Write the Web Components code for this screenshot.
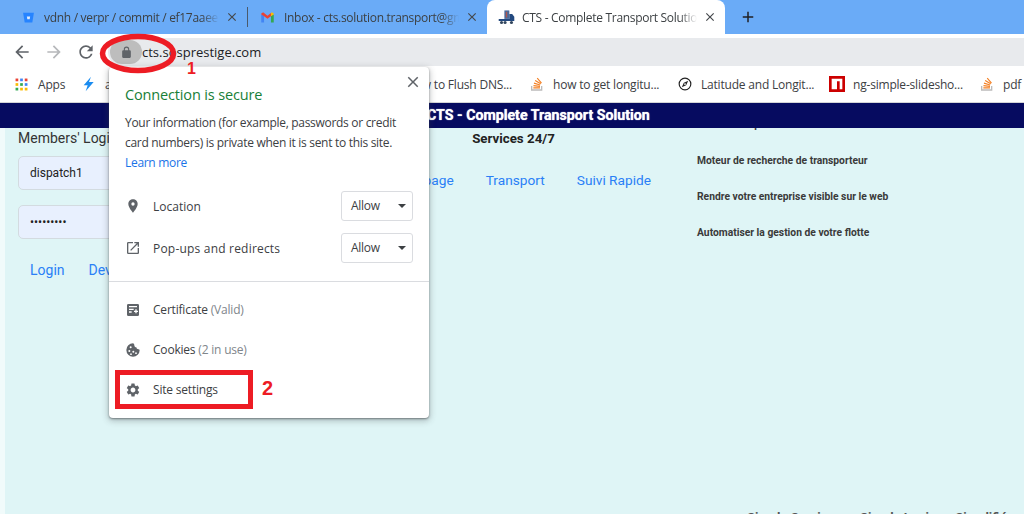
<!DOCTYPE html>
<html lang="en">
<head>
<meta charset="utf-8">
<title>CTS - Complete Transport Solution</title>
<style>
    html, body { margin: 0; padding: 0; height: 100%; overflow: hidden; background: #fff; }
</style>
</head>
<body>
<app-root></app-root>
<script>
const ICONS = {
    back: 'M20 11H7.83l5.59-5.59L12 4l-8 8 8 8 1.41-1.41L7.83 13H20v-2z',
    reload: 'M17.65 6.35A7.96 7.96 0 0 0 12 4c-4.42 0-7.99 3.58-7.99 8s3.57 8 7.99 8c3.73 0 6.84-2.55 7.73-6h-2.08A5.99 5.99 0 0 1 12 18c-3.31 0-6-2.69-6-6s2.69-6 6-6c1.66 0 3.14.69 4.22 1.78L13 11h7V4l-2.35 2.35z',
    close: 'M19 6.41 17.59 5 12 10.59 6.41 5 5 6.41 10.59 12 5 17.59 6.41 19 12 13.41 17.59 19 19 17.59 13.41 12z',
    plus: 'M19 13h-6v6h-2v-6H5v-2h6V5h2v6h6v2z',
    lock: 'M18 8h-1V6A5 5 0 0 0 7 6v2H6a2 2 0 0 0-2 2v10c0 1.1.9 2 2 2h12a2 2 0 0 0 2-2V10a2 2 0 0 0-2-2zM9 6a3 3 0 0 1 6 0v2H9V6z',
    pin: 'M12 2C8.13 2 5 5.13 5 9c0 5.25 7 13 7 13s7-7.75 7-13c0-3.87-3.13-7-7-7zm0 9.5a2.5 2.5 0 0 1 0-5 2.5 2.5 0 0 1 0 5z',
    external: 'M19 19H5V5h7V3H5a2 2 0 0 0-2 2v14a2 2 0 0 0 2 2h14c1.1 0 2-.9 2-2v-7h-2v7zM14 3v2h3.59l-9.83 9.83 1.41 1.41L19 6.41V10h2V3h-7z',
    certificate: 'M5 3h14a2 2 0 0 1 2 2v14a2 2 0 0 1-2 2H5a2 2 0 0 1-2-2V5a2 2 0 0 1 2-2zm1 3v2h12V6H6zm0 4v2h7v-2H6zm0 4v2h4v-2H6zm9.5-3v2h-2v2h2v2h2v-2h2v-2h-2v-2h-2z',
    cookie: 'M12 2a10 10 0 1 0 10 10c-.3-.9-1-1.2-1.8-1.2-1.8 0-3-1-3.2-2.8-1.8-.2-3-1.4-3-3.2C14 3.8 13.2 2.3 12 2zM8.5 6.5a1.5 1.5 0 1 1 0 3 1.5 1.5 0 0 1 0-3zM6.5 12a1.5 1.5 0 1 1 0 3 1.5 1.5 0 0 1 0-3zm6 1a1.5 1.5 0 1 1 0 3 1.5 1.5 0 0 1 0-3zm-3.5 4a1.3 1.3 0 1 1 0 2.6 1.3 1.3 0 0 1 0-2.6zm7.5-1.5a1.3 1.3 0 1 1 0 2.6 1.3 1.3 0 0 1 0-2.6z',
    gear: 'M19.14 12.94c.04-.3.06-.61.06-.94 0-.32-.02-.64-.07-.94l2.03-1.58a.49.49 0 0 0 .12-.61l-1.92-3.32a.488.488 0 0 0-.59-.22l-2.39.96c-.5-.38-1.03-.7-1.62-.94l-.36-2.54a.484.484 0 0 0-.48-.41h-3.84c-.24 0-.43.17-.47.41l-.36 2.54c-.59.24-1.13.57-1.62.94l-2.39-.96c-.22-.08-.47 0-.59.22L2.74 8.87c-.12.21-.08.47.12.61l2.03 1.58c-.05.3-.09.63-.09.94s.02.64.07.94l-2.03 1.58a.49.49 0 0 0-.12.61l1.92 3.32c.12.22.37.29.59.22l2.39-.96c.5.38 1.03.7 1.62.94l.36 2.54c.05.24.24.41.48.41h3.84c.24 0 .44-.17.47-.41l.36-2.54c.59-.24 1.13-.56 1.62-.94l2.39.96c.22.08.47 0 .59-.22l1.92-3.32c.12-.22.07-.47-.12-.61l-2.01-1.58zM12 15.6c-1.98 0-3.6-1.62-3.6-3.6s1.62-3.6 3.6-3.6 3.6 1.62 3.6 3.6-1.62 3.6-3.6 3.6z'
};

const FAVICONS = {
    bitbucket: '<path fill="#2684ff" d="M2 3h20l-3 18H5z"/><path fill="#fff" opacity=".85" d="M9 10h6l-.8 5H9.8z"/>',
    gmail: '<path fill="#4285f4" d="M2 7v13h4.5V9z"/><path fill="#34a853" d="M17.5 9v11H22V7z"/><path fill="#ea4335" d="M2 7c0-2.5 2.7-3.8 4.5-2.4L12 9l5.5-4.4.5 4.9-6 4.5-5.5-4.2L2 7z"/><path fill="#fbbc04" d="M17.5 4.6C19.3 3.200 22 4.5 22 7l-4.5 3z"/>',
    truck: '<path fill="#4a6a9a" d="M9 2h7v12H9z"/><path fill="#b0574f" d="M11 4h2v8h-2z"/><path fill="#23497f" d="M16 7h4l3 4v6H1v-3h15z"/><circle cx="5" cy="19" r="2.2" fill="#33475f"/><circle cx="10" cy="19" r="2.2" fill="#33475f"/><circle cx="19" cy="19" r="2.2" fill="#33475f"/>',
    apps: '<rect x="1" y="1" width="5" height="5" fill="#ea4335"/><rect x="9.5" y="1" width="5" height="5" fill="#4285f4"/><rect x="18" y="1" width="5" height="5" fill="#ea4335"/><rect x="1" y="9.5" width="5" height="5" fill="#fbbc04"/><rect x="9.5" y="9.5" width="5" height="5" fill="#34a853"/><rect x="18" y="9.5" width="5" height="5" fill="#4285f4"/><rect x="1" y="18" width="5" height="5" fill="#34a853"/><rect x="9.5" y="18" width="5" height="5" fill="#fbbc04"/><rect x="18" y="18" width="5" height="5" fill="#fbbc04"/>',
    bolt: '<path fill="#1a8cf0" d="M15 1 4 14h6l-3 9 12-14h-7z"/>',
    stack: '<path fill="#bcbbbb" d="M3 15h2v5h13v-5h2v7H3z"/><path fill="#f48024" d="M6.5 17h10v1.8h-10zM6.8 13.5l9.8 1.2-.2 1.8-9.8-1.2zM7.7 9.8l9.300 2.9-.5 1.7-9.3-2.9zM9.7 6l8.300 5-.9 1.5-8.3-5zM13 2.8l6.4 7.2-1.3 1.1-6.4-7.2z"/>',
    compass: '<circle cx="12" cy="12" r="10" fill="#fff" stroke="#222" stroke-width="2"/><path fill="#222" d="m17.5 6.5-7.5 3.5-3.500 7.500L14 14z"/><circle cx="12" cy="12" r="1.5" fill="#fff"/>',
    npm: '<path fill="#c00" d="M0 0h24v24H0z"/><path fill="#fff" d="M4 4h16v16h-4V8h-4v12H4z"/>'
};

// one element for all the material icons, path picked by name
class UiIcon extends HTMLElement {
    connectedCallback() {
        const size = this.getAttribute('size') || 16;
        const color = this.getAttribute('color') || '#5f6368';
        this.attachShadow({ mode: 'open' }).innerHTML = `
<style>:host { display: inline-flex; flex: none; width: ${size}px; height: ${size}px; } svg { display: block; }</style>
<svg width="${size}" height="${size}" viewBox="0 0 24 24"><path fill="${color}" fill-rule="evenodd" d="${ICONS[this.getAttribute('name')]}"/></svg>`;
    }
}
customElements.define('ui-icon', UiIcon);

class FavIcon extends HTMLElement {
    connectedCallback() {
        const size = this.getAttribute('size') || 16;
        this.attachShadow({ mode: 'open' }).innerHTML = `
<style>:host { display: inline-flex; flex: none; width: ${size}px; height: ${size}px; } svg { display: block; }</style>
<svg width="${size}" height="${size}" viewBox="0 0 24 24">${FAVICONS[this.getAttribute('name')]}</svg>`;
    }
}
customElements.define('fav-icon', FavIcon);

const tabTemplate = document.createElement('template');
tabTemplate.innerHTML = `
<style>
    :host {
        display: flex;
        align-items: center;
        box-sizing: border-box;
        height: 34px;
        color: #3c4043;
        font: 12px "Open Sans", "Liberation Sans", sans-serif;
        letter-spacing: -.3px;
    }
    :host([active]) { background: #fff; border-radius: 8px 8px 0 0; }
    #title {
        flex: 1;
        min-width: 0;
        overflow: hidden;
        white-space: nowrap;
        -webkit-mask-image: linear-gradient(to right, #000 90%, transparent);
    }
    ::slotted(fav-icon) { margin-right: var(--icon-gap, 9px); }
    ui-icon { margin: 0 8px 0 6px; }
</style>
<slot name="icon"></slot>
<div id="title"><slot></slot></div>
<ui-icon name="close" size="14" color="#45484c"></ui-icon>`;

class BrowserTab extends HTMLElement {
    constructor() {
        super();
        this.attachShadow({ mode: 'open' });
        this.shadowRoot.appendChild(tabTemplate.content.cloneNode(true));
    }
}
customElements.define('browser-tab', BrowserTab);

const tabsTemplate = document.createElement('template');
tabsTemplate.innerHTML = `
<style>
    :host { display: flex; height: 34px; background: #6aabf7; flex: none; }
    .sep { width: 1px; height: 20px; margin: 7px 12px 0 0; background: #4a5a6c; }
    #plus { margin: 8px 0 0 14px; }
    browser-tab:nth-of-type(1) { width: 225px; margin-left: 22px; }
    browser-tab:nth-of-type(2) { width: 227px; }
    browser-tab:nth-of-type(3) { width: 238px; padding-left: 11px; --icon-gap: 7px; }
</style>
<browser-tab><fav-icon slot="icon" name="bitbucket" size="13"></fav-icon>vdnh / verpr / commit / ef17aaee</browser-tab>
<div class="sep"></div>
<browser-tab><fav-icon slot="icon" name="gmail" size="15"></fav-icon>Inbox - cts.solution.transport@gmail.com</browser-tab>
<browser-tab active><fav-icon slot="icon" name="truck" size="17"></fav-icon>CTS - Complete Transport Solution</browser-tab>
<ui-icon id="plus" name="plus" size="18" color="#202124"></ui-icon>`;

class BrowserTabs extends HTMLElement {
    constructor() {
        super();
        this.attachShadow({ mode: 'open' });
        this.shadowRoot.appendChild(tabsTemplate.content.cloneNode(true));
    }
}
customElements.define('browser-tabs', BrowserTabs);

const toolbarTemplate = document.createElement('template');
toolbarTemplate.innerHTML = `
<style>
    :host {
        display: flex;
        align-items: center;
        flex: none;
        box-sizing: border-box;
        height: 32px;
        padding: 4px 0 0 12px;
        gap: 12px;
        background: #fff;
    }
    #url {
        flex: 1;
        display: flex;
        align-items: center;
        height: 28px;
        border-radius: 14px 0 0 14px;
        background: #e8eaed;
        color: #202124;
        font: 13px "Open Sans", "Liberation Sans", sans-serif;
    }
    #lock {
        display: flex;
        align-items: center;
        justify-content: center;
        width: 32px;
        height: 24px;
        margin-left: 2px;
        border-radius: 12px;
        background: #bdbdbd;
    }
</style>
<ui-icon name="back" size="20" color="#5f6368"></ui-icon>
<ui-icon name="back" size="20" color="#b6b8bb" style="transform: scaleX(-1)"></ui-icon>
<ui-icon name="reload" size="20" color="#5f6368"></ui-icon>
<div id="url"><div id="lock"><ui-icon name="lock" size="13" color="#5f6368"></ui-icon></div>cts.sosprestige.com</div>`;

class BrowserToolbar extends HTMLElement {
    constructor() {
        super();
        this.attachShadow({ mode: 'open' });
        this.shadowRoot.appendChild(toolbarTemplate.content.cloneNode(true));
    }
}
customElements.define('browser-toolbar', BrowserToolbar);

const bookmarkTemplate = document.createElement('template');
bookmarkTemplate.innerHTML = `
<style>
    :host {
        display: flex;
        align-items: center;
        gap: 8px;
        flex: none;
        white-space: nowrap;
        color: #3c4043;
        font: 12px "Open Sans", "Liberation Sans", sans-serif;
        letter-spacing: -.2px;
    }
    ::slotted(fav-icon[name="stack"]) { margin-left: -2px; }
    ::slotted(fav-icon[name="bolt"]) { margin-left: -3px; }
</style>
<slot name="icon"></slot><span><slot></slot></span>`;

class BookmarkItem extends HTMLElement {
    constructor() {
        super();
        this.attachShadow({ mode: 'open' });
        this.shadowRoot.appendChild(bookmarkTemplate.content.cloneNode(true));
    }
}
customElements.define('bookmark-item', BookmarkItem);

const barTemplate = document.createElement('template');
barTemplate.innerHTML = `
<style>
    :host {
        display: flex;
        align-items: center;
        flex: none;
        box-sizing: border-box;
        height: 37px;
        padding-left: 15px;
        overflow: hidden;
        background: #fff;
        border-bottom: 1px solid #d4d5d7;
    }
    bookmark-item:nth-of-type(1) { width: 69px; gap: 10px; }
    bookmark-item:nth-of-type(2) { width: 165px; }
    bookmark-item:nth-of-type(3) { width: 282px; padding-right: 19px; box-sizing: border-box; justify-content: flex-end; }
    bookmark-item:nth-of-type(4) { width: 147px; }
    bookmark-item:nth-of-type(5) { width: 151px; gap: 9px; }
    bookmark-item:nth-of-type(6) { width: 152px; }
</style>
<bookmark-item><fav-icon slot="icon" name="apps" size="13"></fav-icon>Apps</bookmark-item>
<bookmark-item><fav-icon slot="icon" name="bolt" size="16"></fav-icon>a</bookmark-item>
<bookmark-item>how to Flush DNS...</bookmark-item>
<bookmark-item><fav-icon slot="icon" name="stack" size="16"></fav-icon>how to get longitu...</bookmark-item>
<bookmark-item><fav-icon slot="icon" name="compass" size="14"></fav-icon>Latitude and Longit...</bookmark-item>
<bookmark-item><fav-icon slot="icon" name="npm" size="16"></fav-icon>ng-simple-slidesho...</bookmark-item>
<bookmark-item><fav-icon slot="icon" name="stack" size="16"></fav-icon>pdf</bookmark-item>`;

class BookmarkBar extends HTMLElement {
    constructor() {
        super();
        this.attachShadow({ mode: 'open' });
        this.shadowRoot.appendChild(barTemplate.content.cloneNode(true));
    }
}
customElements.define('bookmark-bar', BookmarkBar);

const pageTemplate = document.createElement('template');
pageTemplate.innerHTML = `
<style>
    :host {
        display: flex;
        flex-direction: column;
        flex: 1;
        min-height: 0;
        overflow: hidden;
        background: #f1fbfb;
        font-family: Roboto, "Liberation Sans", sans-serif;
        color: #333;
    }
    #banner {
        flex: none;
        height: 25px;
        padding-left: 427px;
        background: #060b60;
        color: #fff;
        font-size: 14.2px;
        font-weight: 700;
        line-height: 25px;
        white-space: nowrap;
        text-shadow: 0 0 1px #fff;
    }
    #body {
        flex: 1;
        min-height: 0;
        margin-left: 5px;
        overflow: hidden;
        display: flex;
        flex-direction: column;
        background: #dff5f6;
    }
    #cols { flex: 1; min-height: 0; display: grid; grid-template-columns: 325px 367px 1fr; }
    #login { padding: 2px 0 0 13px; font-size: 14px; }
    #login h2 { margin: 0 0 9px; font: inherit; line-height: 17px; color: #333; }
    .field {
        box-sizing: border-box;
        width: 260px;
        height: 34px;
        margin-bottom: 15px;
        padding-left: 11px;
        border: 1px solid #d3dbe0;
        border-radius: 5px;
        background: #e8f0fe;
        color: #222;
        font-size: 12px;
        line-height: 33px;
    }
    .links { display: flex; gap: 24px; padding: 8px 0 0 12px; }
    a { color: #2a7ff6; text-decoration: none; font-size: 14px; }
    #center h3 { margin: 3px 0 0; font-size: 13.3px; line-height: 16px; text-align: center; color: #222; }
    #nav { display: flex; justify-content: flex-end; gap: 32px; padding: 25px 46px 0 0; line-height: 17px; }
    #nav a { font-size: 13.7px; }
    #list { margin: -11px 0 0; padding: 0; list-style: none; font-size: 10.3px; font-weight: 700; color: #3a3a3a; }
    #list li { height: 36px; line-height: 16px; }
    #foot {
        flex: none;
        display: flex;
        gap: 19px;
        height: 3px;
        padding-left: 742px;
        overflow: hidden;
        font-size: 13px;
        font-weight: 700;
        line-height: 14px;
        white-space: nowrap;
        color: #555;
    }
</style>
<div id="banner">CTS - Complete Transport Solution</div>
<div id="body">
    <div id="cols">
        <div id="login">
            <h2>Members' Login</h2>
            <div class="field">dispatch1</div>
            <div class="field">&#8226;&#8226;&#8226;&#8226;&#8226;&#8226;&#8226;&#8226;&#8226;</div>
            <div class="links"><a>Login</a><a>Devenir membre</a></div>
        </div>
        <div id="center">
            <h3>Services 24/7</h3>
            <div id="nav"><a>Groupage</a><a>Transport</a><a>Suivi Rapide</a></div>
        </div>
        <ul id="list">
            <li>Suivi en temps réel</li>
            <li>Moteur de recherche de transporteur</li>
            <li>Rendre votre entreprise visible sur le web</li>
            <li>Automatiser la gestion de votre flotte</li>
        </ul>
    </div>
    <div id="foot"><span>Simple Services</span><span>Simple Login</span><span>Simplifié</span></div>
</div>`;

class SitePage extends HTMLElement {
    constructor() {
        super();
        this.attachShadow({ mode: 'open' });
        this.shadowRoot.appendChild(pageTemplate.content.cloneNode(true));
    }
}
customElements.define('site-page', SitePage);

const permTemplate = document.createElement('template');
permTemplate.innerHTML = `
<style>
    :host { display: flex; align-items: center; height: 30px; padding: 0 16px; color: #3c4043; }
    ::slotted(ui-icon) { margin-right: 12px; }
    #label { flex: 1; padding-top: 1px; }
    #select {
        display: flex;
        align-items: center;
        justify-content: space-between;
        box-sizing: border-box;
        width: 72px;
        height: 30px;
        padding: 0 6px 0 9px;
        border: 1px solid #dadce0;
        border-radius: 3px;
        letter-spacing: -.3px;
    }
    #arrow { width: 0; height: 0; border: 4px solid transparent; border-top: 4.5px solid #3c4043; border-bottom: 0; }
</style>
<slot name="icon"></slot><span id="label"><slot></slot></span>
<div id="select">Allow<span id="arrow"></span></div>`;

class PermissionRow extends HTMLElement {
    constructor() {
        super();
        this.attachShadow({ mode: 'open' });
        this.shadowRoot.appendChild(permTemplate.content.cloneNode(true));
    }
}
customElements.define('permission-row', PermissionRow);

const linkTemplate = document.createElement('template');
linkTemplate.innerHTML = `
<style>
    :host { display: flex; align-items: center; height: 40px; padding: 0 16px; color: #3c4043; letter-spacing: -.2px; }
    ::slotted(ui-icon) { margin-right: 12px; }
    ::slotted(span) { color: #80868b; }
</style>
<slot name="icon"></slot><slot></slot>`;

class InfoLink extends HTMLElement {
    constructor() {
        super();
        this.attachShadow({ mode: 'open' });
        this.shadowRoot.appendChild(linkTemplate.content.cloneNode(true));
    }
}
customElements.define('info-link', InfoLink);

const popupTemplate = document.createElement('template');
popupTemplate.innerHTML = `
<style>
    :host {
        position: absolute;
        left: 109px;
        top: 67px;
        box-sizing: border-box;
        width: 320px;
        height: 351px;
        padding-top: 18px;
        border-radius: 4px;
        background: #fff;
        box-shadow: 0 1px 2px rgba(60, 64, 67, .55), 0 2px 6px 1px rgba(60, 64, 67, .3);
        font: 12px/20px "Open Sans", "Liberation Sans", sans-serif;
        color: #3c4043;
    }
    #close { position: absolute; right: 7px; top: 6px; }
    h1 { margin: 0 16px 8px; font-size: 14.5px; font-weight: 400; line-height: 20px; letter-spacing: -.15px; color: #188038; }
    p { margin: 0 16px; color: #3c4043; letter-spacing: -.3px; }
    a { color: #1a73e8; }
    #perms { display: flex; flex-direction: column; gap: 12px; margin-top: 18px; }
    permission-row:last-child { letter-spacing: .2px; }
    hr { margin: 18px 0 8px; border: 0; border-top: 1px solid #dadce0; }
</style>
<ui-icon id="close" name="close" size="18" color="#5f6368"></ui-icon>
<h1>Connection is secure</h1>
<p>Your information (for example, passwords or credit card numbers) is private when it is sent to this site.<br><a>Learn more</a></p>
<div id="perms">
    <permission-row><ui-icon slot="icon" name="pin" size="16"></ui-icon>Location</permission-row>
    <permission-row><ui-icon slot="icon" name="external" size="16"></ui-icon>Pop-ups and redirects</permission-row>
</div>
<hr>
<info-link><ui-icon slot="icon" name="certificate" size="16"></ui-icon>Certificate&nbsp;<span>(Valid)</span></info-link>
<info-link><ui-icon slot="icon" name="cookie" size="16"></ui-icon>Cookies&nbsp;<span>(2 in use)</span></info-link>
<info-link><ui-icon slot="icon" name="gear" size="16"></ui-icon>Site settings</info-link>`;

class SiteInfoPopup extends HTMLElement {
    constructor() {
        super();
        this.attachShadow({ mode: 'open' });
        this.shadowRoot.appendChild(popupTemplate.content.cloneNode(true));
    }
}
customElements.define('site-info-popup', SiteInfoPopup);

// red marks drawn on top of the screenshot
const marksTemplate = document.createElement('template');
marksTemplate.innerHTML = `
<style>
    :host { position: absolute; inset: 0; pointer-events: none; color: #ed1c24; font: 700 16px "Liberation Sans", sans-serif; }
    svg { position: absolute; left: 0; top: 0; }
    #box { position: absolute; left: 115px; top: 370px; box-sizing: border-box; width: 138px; height: 39px; border: 5px solid #ed1c24; }
    #one { position: absolute; left: 187px; top: 60px; line-height: 18px; }
    #two { position: absolute; left: 262px; top: 376px; font-size: 20px; line-height: 24px; }
</style>
<svg width="200" height="90"><ellipse cx="138" cy="53.5" rx="35.5" ry="17" fill="none" stroke="#ed1c24" stroke-width="5.5"/></svg>
<div id="one">1</div>
<div id="box"></div>
<div id="two">2</div>`;

class AnnotationMarks extends HTMLElement {
    constructor() {
        super();
        this.attachShadow({ mode: 'open' });
        this.shadowRoot.appendChild(marksTemplate.content.cloneNode(true));
    }
}
customElements.define('annotation-marks', AnnotationMarks);

const rootTemplate = document.createElement('template');
rootTemplate.innerHTML = `
<style>
    :host { display: flex; flex-direction: column; position: relative; height: 100vh; overflow: hidden; }
</style>
<browser-tabs></browser-tabs>
<browser-toolbar></browser-toolbar>
<bookmark-bar></bookmark-bar>
<site-page></site-page>
<site-info-popup></site-info-popup>
<annotation-marks></annotation-marks>`;

class AppRoot extends HTMLElement {
    constructor() {
        super();
        this.attachShadow({ mode: 'open' });
        this.shadowRoot.appendChild(rootTemplate.content.cloneNode(true));
    }
}
customElements.define('app-root', AppRoot);
</script>
</body>
</html>
